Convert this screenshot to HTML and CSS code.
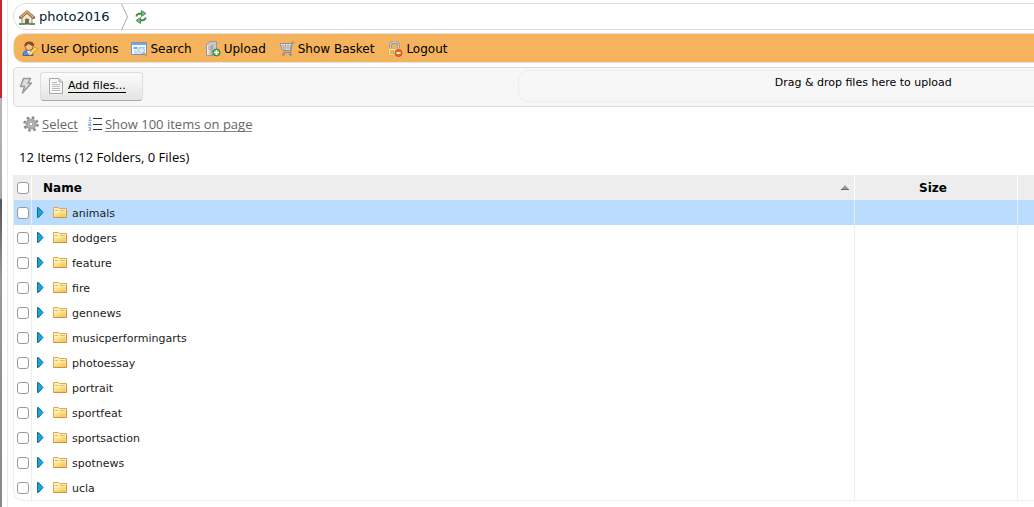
FILE: index.html
```html
<!DOCTYPE html>
<html lang="en">
<head>
  <meta charset="UTF-8" />
  <meta name="viewport" content="width=device-width, initial-scale=1.0" />
  <title>photo2016</title>
  <link rel="stylesheet" href="styles.css">
</head>
<body>
  <!-- shared icons -->
  <svg class="defs" width="0" height="0">
    <defs>
      <linearGradient id="gold" x1="0" y1="0" x2="1" y2="1">
        <stop offset="0" stop-color="#fff3b8" />
        <stop offset="1" stop-color="#f0c040" />
      </linearGradient>
      <linearGradient id="steel" x1="0" y1="0" x2="1" y2="0">
        <stop offset="0" stop-color="#f4f4f4" />
        <stop offset="1" stop-color="#9a9a9a" />
      </linearGradient>
    </defs>
    <symbol id="folder" viewBox="0 0 14 12">
      <path d="M.5 10.500V.5h5l1 1h7v9z" fill="#fff0b8" stroke="#e0a650" />
      <path d="M2 3.500h3M7 3.500h5" stroke="#e6b860" />
      <path d="M1.500 10V6.500H6l1-1.500h5.500v5z" fill="url(#gold)" stroke="#f7dc80" stroke-width=".6" />
      <path d="M.5 10.500h13v-8" fill="none" stroke="#d58f42" />
    </symbol>
    <symbol id="expand" viewBox="0 0 7 11">
      <path d="M.5.500h1l4.500 5-4.500 5h-1z" fill="#1ba6e0" stroke="#12699b" />
    </symbol>
  </svg>

  <div class="page">
    <nav class="path">
      <a class="home" href="#">
        <svg width="16" height="16" viewBox="0 0 16 16">
          <path d="M3 7.500 8 3l5 4.500V15H3z" fill="#f2e6d2" stroke="#a08c70" />
          <path d="M1.500 8.500 8 2.800l6.500 5.700" fill="none" stroke="#8f6540" stroke-width="3" stroke-linecap="round" stroke-linejoin="round" />
          <path d="M1.500 8.300 8 2.600l6.500 5.700" fill="none" stroke="#d9a877" stroke-width="1.600" />
          <path d="M6.500 15v-5h3v5z" fill="#86623f" stroke="#5f5f5f" stroke-width=".7" />
          <path d="M0 15h6M10 15h6" stroke="#5e9b58" stroke-width="2" />
        </svg>
        photo2016
      </a>
      <svg class="chevron" width="8" height="26" viewBox="0 0 8 26">
        <path d="M.5 0 6.500 13 .5 26" fill="none" stroke="#aaa" />
      </svg>
      <a class="refresh" href="#" aria-label="Refresh">
        <svg width="12" height="14" viewBox="0 0 12 14">
          <path d="M1.500 6.500C1.500 4 3 3.500 7 3.500M10.500 7.500c0 2.500-1.500 3-5.500 3" fill="none" stroke="#3f8a48" stroke-width="2" />
          <path d="M6.500.5 11 3.500l-4.500 3zM5.500 7.500l-4.500 3 4.500 3z" fill="#6cc46c" stroke="#3c8443" stroke-width=".8" />
        </svg>
      </a>
    </nav>

    <nav class="menu">
      <a href="#">
        <svg width="16" height="16" viewBox="0 0 16 16">
          <path d="M1 14.500c0-4 2-5 5-5s5 1 5 5z" fill="#5b8fd0" stroke="#3e67a0" />
          <path d="M5 9.500 6.500 13 9 9.500z" fill="#fff" />
          <circle cx="7" cy="5.500" r="4" fill="#f4c088" stroke="#9c6534" />
          <path d="M2.500 5C2 0 10-1 12 3v2C9 5 7 3 6 3 5 5 4 5 2.500 5z" fill="#8a4d24" />
          <path d="m7 14 1-3 5-5 2.500 2-5.500 5z" fill="#ffd75a" stroke="#c98a28" stroke-width=".8" />
          <path d="m7 14 1-3 2 2z" fill="#fff0d0" />
        </svg>
        User Options
      </a>
      <a href="#">
        <svg width="16" height="16" viewBox="0 0 16 16">
          <path d="M.5 1.500h15v12H.5z" fill="#f6f9fd" stroke="#6c98cf" />
          <path d="M1 3h14" stroke="#76a6df" stroke-width="2" />
          <path d="M2.500 6h4v2h-4z" fill="#76a6df" />
          <path d="M3 10h4M3 12h4M8 6.500h6" stroke="#a9c4e6" />
          <circle cx="10.500" cy="9.500" r="3" fill="#d9edfc" stroke="#a3b9d3" />
          <path d="m12.500 12 3 3" stroke="#c69863" stroke-width="1.800" />
        </svg>
        Search
      </a>
      <a href="#">
        <svg width="16" height="16" viewBox="0 0 16 16">
          <path d="M1.500 3.500 5 .5h6.500v12L9 14.500H1.500z" fill="#c8c8c8" stroke="#999" />
          <path d="M2 4h6v10H2z" fill="url(#steel)" />
          <path d="M3 6h4M3 8h4" stroke="#aaa" />
          <circle cx="11.500" cy="11.500" r="3.500" fill="#62b256" stroke="#39813a" />
          <path d="M11.500 9v5M9 11.500h5" stroke="#fff" stroke-width="1.600" />
        </svg>
        Upload
      </a>
      <a href="#">
        <svg width="16" height="16" viewBox="0 0 16 16">
          <path d="M1 2.500h11.500l-1 7h-8z" fill="#ededed" stroke="#929292" />
          <path d="M2 5h10M2.500 7h9M4 3l1 6M6.500 3v6M9 3v6" stroke="#aaa" />
          <path d="M15.500 1.500H13l-1.500 10H4" fill="none" stroke="#929292" stroke-width="1.400" />
          <circle cx="4.500" cy="13.500" r="1.300" fill="#888" />
          <circle cx="11.500" cy="13.500" r="1.300" fill="#888" />
        </svg>
        Show Basket
      </a>
      <a href="#">
        <svg width="16" height="16" viewBox="0 0 16 16">
          <path d="M3.500 8V5a4 4 0 0 1 8 0v3" fill="none" stroke="#888" stroke-width="2.800" />
          <path d="M3.500 8V5a4 4 0 0 1 8 0v3" fill="none" stroke="#d0d0d0" stroke-width="1.400" />
          <path d="M1.500 7.500h12v7h-12z" fill="url(#gold)" stroke="#e0b455" />
          <path d="M3 10h4M3 12h4" stroke="#b88932" />
          <circle cx="11.500" cy="12" r="3.500" fill="#e86732" stroke="#c4532b" />
          <path d="M9.500 12h4" stroke="#fff" stroke-width="1.600" />
        </svg>
        Logout
      </a>
    </nav>

    <div class="upload">
      <svg width="14" height="18" viewBox="0 0 14 18">
        <path d="M4.500 1.500h7L9 6h3.500l-9 10 2-6.500h-4z" fill="#ddd" stroke="#999" stroke-width="1.500" stroke-linejoin="round" />
      </svg>
      <button type="button" class="add-files">
        <svg width="14" height="16" viewBox="0 0 14 16">
          <path d="M.5.500H10L13.500 4v11.500H.5z" fill="#f8f8f8" stroke="#aaa" />
          <path d="M10 .5V4h3.500" fill="#ddd" stroke="#aaa" />
          <path d="M3 4.500h5M3 6.500h8M3 8.500h8M3 10.500h8M3 12.500h8" stroke="#bbb" />
        </svg>
        <span>Add files...</span>
      </button>
      <div class="dropzone">Drag &amp; drop files here to upload</div>
    </div>

    <div class="actions">
      <a href="#">
        <svg width="16" height="16" viewBox="0 0 16 16">
          <circle cx="8" cy="8" r="6.500" fill="none" stroke="#8c8c8c" stroke-width="2.600" stroke-dasharray="2.600 2.505" />
          <circle cx="8" cy="8" r="4.300" fill="#d0d0d0" stroke="#a5a5a5" stroke-width="2.400" />
          <circle cx="8" cy="8" r="2" fill="#fff" stroke="#888" />
        </svg>
        <span>Select</span>
      </a>
      <a href="#">
        <svg width="14" height="16" viewBox="0 0 14 16">
          <path d="M1 1h1v3M.5 4.500h3M.5 6.500h2v2h-2v1h3M.5 11.500h2v3h-2M1 13h1.500" fill="none" stroke="#82a9de" />
          <path d="M5 2.500h9M5 8.500h9M5 13.500h9" stroke="#333" />
        </svg>
        <span>Show 100 items on page</span>
      </a>
    </div>

    <p class="summary">12 Items (12 Folders, 0 Files)</p>

    <div class="list">
      <table>
        <colgroup>
          <col class="col-check">
          <col class="col-name">
          <col class="col-size">
          <col class="col-rest">
        </colgroup>
        <thead>
          <tr>
            <th><input type="checkbox" aria-label="Select all"></th>
            <th>
              <div class="sort">
                Name
                <svg width="8" height="5" viewBox="0 0 8 5">
                  <path d="M0 4.500 4 0l4 4.500z" fill="#999" />
                  <path d="M0 4.500h8" stroke="#666" />
                </svg>
              </div>
            </th>
            <th class="size">Size</th>
            <th></th>
          </tr>
        </thead>
        <tbody>
          <tr class="active">
            <td><input type="checkbox" aria-label="animals"></td>
            <td><div class="item"><svg width="7" height="11"><use href="#expand" /></svg><svg width="14" height="12"><use href="#folder" /></svg><span>animals</span></div></td>
            <td></td>
            <td></td>
          </tr>
          <tr>
            <td><input type="checkbox" aria-label="dodgers"></td>
            <td><div class="item"><svg width="7" height="11"><use href="#expand" /></svg><svg width="14" height="12"><use href="#folder" /></svg><span>dodgers</span></div></td>
            <td></td>
            <td></td>
          </tr>
          <tr>
            <td><input type="checkbox" aria-label="feature"></td>
            <td><div class="item"><svg width="7" height="11"><use href="#expand" /></svg><svg width="14" height="12"><use href="#folder" /></svg><span>feature</span></div></td>
            <td></td>
            <td></td>
          </tr>
          <tr>
            <td><input type="checkbox" aria-label="fire"></td>
            <td><div class="item"><svg width="7" height="11"><use href="#expand" /></svg><svg width="14" height="12"><use href="#folder" /></svg><span>fire</span></div></td>
            <td></td>
            <td></td>
          </tr>
          <tr>
            <td><input type="checkbox" aria-label="gennews"></td>
            <td><div class="item"><svg width="7" height="11"><use href="#expand" /></svg><svg width="14" height="12"><use href="#folder" /></svg><span>gennews</span></div></td>
            <td></td>
            <td></td>
          </tr>
          <tr>
            <td><input type="checkbox" aria-label="musicperformingarts"></td>
            <td><div class="item"><svg width="7" height="11"><use href="#expand" /></svg><svg width="14" height="12"><use href="#folder" /></svg><span>musicperformingarts</span></div></td>
            <td></td>
            <td></td>
          </tr>
          <tr>
            <td><input type="checkbox" aria-label="photoessay"></td>
            <td><div class="item"><svg width="7" height="11"><use href="#expand" /></svg><svg width="14" height="12"><use href="#folder" /></svg><span>photoessay</span></div></td>
            <td></td>
            <td></td>
          </tr>
          <tr>
            <td><input type="checkbox" aria-label="portrait"></td>
            <td><div class="item"><svg width="7" height="11"><use href="#expand" /></svg><svg width="14" height="12"><use href="#folder" /></svg><span>portrait</span></div></td>
            <td></td>
            <td></td>
          </tr>
          <tr>
            <td><input type="checkbox" aria-label="sportfeat"></td>
            <td><div class="item"><svg width="7" height="11"><use href="#expand" /></svg><svg width="14" height="12"><use href="#folder" /></svg><span>sportfeat</span></div></td>
            <td></td>
            <td></td>
          </tr>
          <tr>
            <td><input type="checkbox" aria-label="sportsaction"></td>
            <td><div class="item"><svg width="7" height="11"><use href="#expand" /></svg><svg width="14" height="12"><use href="#folder" /></svg><span>sportsaction</span></div></td>
            <td></td>
            <td></td>
          </tr>
          <tr>
            <td><input type="checkbox" aria-label="spotnews"></td>
            <td><div class="item"><svg width="7" height="11"><use href="#expand" /></svg><svg width="14" height="12"><use href="#folder" /></svg><span>spotnews</span></div></td>
            <td></td>
            <td></td>
          </tr>
          <tr>
            <td><input type="checkbox" aria-label="ucla"></td>
            <td><div class="item"><svg width="7" height="11"><use href="#expand" /></svg><svg width="14" height="12"><use href="#folder" /></svg><span>ucla</span></div></td>
            <td></td>
            <td></td>
          </tr>
        </tbody>
      </table>
    </div>
  </div>
</body>
</html>
```
FILE: styles.css
```css
* {
  box-sizing: border-box;
}
html {
  overflow: hidden;
}
body {
  margin: 0;
  padding-left: 2px;
  min-height: 100vh;
  font-family: "DejaVu Sans", Verdana, sans-serif;
  font-size: 12px;
  color: #000;
  background: linear-gradient(#c1272d 98px, #b5b5b5 98px, #aaa 198px, #555 200px, #999 280px, #888);
}
svg {
  display: block;
  flex: none;
}
.defs {
  position: absolute;
}
a {
  color: inherit;
  text-decoration: none;
}

/* the file manager is wider than small windows */
.page {
  min-width: 1212px;
  min-height: 100vh;
  padding: 3px 0 6px 5px;
  background: linear-gradient(90deg, #fff 5px, #e8e8e8 5px, #e8e8e8 6px, #fff 6px);
}
.path,
.menu,
.upload,
.list {
  margin-left: 6px;
}

.path {
  display: flex;
  align-items: center;
  height: 27px;
  padding-left: 5px;
  border: 1px solid #ddd;
  border-radius: 13px;
}
.home {
  display: flex;
  align-items: center;
  gap: 4px;
  font-size: 13px;
  color: #001a33;
}
.chevron {
  margin: 0 6px 0 11px;
}

.menu {
  display: flex;
  align-items: center;
  gap: 13px;
  height: 30px;
  margin-top: 3px;
  padding: 2px 0 0 8px;
  border: 1px solid #e8e4de;
  border-radius: 11px;
  background: #f4b35c;
}
.menu a {
  display: flex;
  align-items: center;
  gap: 3px;
}

.upload {
  display: flex;
  align-items: center;
  height: 40px;
  margin-top: 4px;
  padding: 0 5px 2px;
  border: 1px solid #ddd;
  border-radius: 4px;
  background: #f7f7f7;
  font-size: 11px;
}
.add-files {
  display: flex;
  align-items: center;
  gap: 5px;
  height: 29px;
  margin-left: 7px;
  padding: 0 16px 0 8px;
  border: 1px solid #ddd;
  border-bottom-color: #aaa;
  border-radius: 4px;
  background: linear-gradient(#fcfcfc, #e4e4e4);
  font: inherit;
}
.add-files span {
  border-bottom: 1px solid #000;
  line-height: 12px;
}
.dropzone {
  width: 58%;
  height: 32px;
  margin-left: auto;
  border: 1px solid #ededed;
  border-radius: 10px;
  line-height: 24px;
  text-align: center;
}

.actions {
  display: flex;
  gap: 10px;
  margin: 9px 0 0 16px;
  font-family: "Open Sans", sans-serif;
  font-size: 13px;
  color: #666;
}
.actions a {
  display: flex;
  align-items: center;
  gap: 3px;
}
.actions span {
  border-bottom: 1px solid #888;
  line-height: 14px;
}
.summary {
  margin: 16px 0 9px 12px;
  font-family: "Open Sans", sans-serif;
  font-size: 13px;
  line-height: 18px;
}

.list {
  border: 1px solid #ededed;
  border-top: 0;
  border-radius: 0 0 10px 10px;
}
table {
  width: 100%;
  table-layout: fixed;
  border-collapse: separate;
  border-spacing: 0;
}
.col-check {
  width: 18px;
}
.col-size {
  width: 163px;
}
.col-rest {
  width: 195px;
}
th,
td {
  height: 25px;
  padding: 0;
  border-right: 1px solid #ededed;
  text-align: left;
}
th:last-child,
td:last-child {
  border-right: 0;
}
th {
  border-color: #fff;
  background: #ededed;
}
th.size {
  padding-right: 6px;
  text-align: center;
}
.sort {
  display: flex;
  align-items: center;
  justify-content: space-between;
  padding: 0 5px 0 11px;
}
.active td {
  background: #b9dcff;
}
.item {
  display: flex;
  align-items: center;
  font-size: 11px;
  color: #222;
}
.item span {
  padding-top: 2px;
}
.item svg + svg {
  margin: 0 5px 0 9px;
}
.item svg:first-child {
  margin-left: 5px;
}
input[type="checkbox"] {
  display: block;
  appearance: none;
  width: 12px;
  height: 12px;
  margin: 0 0 0 3px;
  border: 1px solid #999;
  border-radius: 3px;
  background: #fff;
}
input[type="checkbox"]:checked {
  background: #1ba6e0;
}
```
